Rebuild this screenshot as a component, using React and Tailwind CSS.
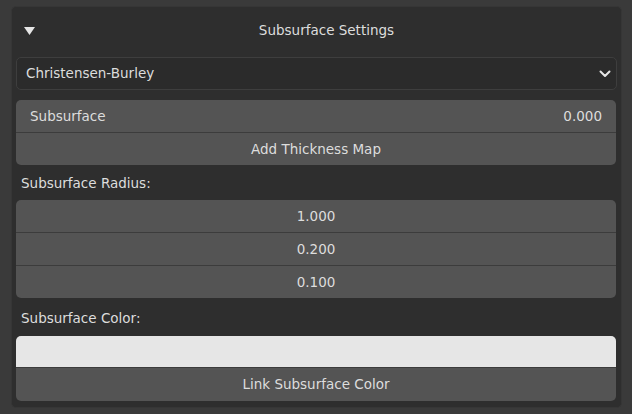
export default function App() {
  const font = { fontFamily: '"DejaVu Sans", "Liberation Sans", sans-serif' };
  return (
    <div className="w-[632px] h-[414px] bg-[#3a3a3a] pt-[6px] pl-[11px]" style={font}>
      <div className="w-[611px] h-[402px] bg-[#2e2e2e] border border-[#363636] rounded-[5px] px-[4px] flex flex-col text-[13.5px] text-[#dddddd]">
        <div className="h-[50px] flex items-center relative">
          <svg className="absolute left-[8px] top-[20px]" width="11" height="8" viewBox="0 0 11 8">
            <path d="M0 0 H11 L5.5 8 Z" fill="#e6e6e6" />
          </svg>
          <div className="w-full text-center pl-[20px] pb-[4px]">Subsurface Settings</div>
        </div>
        <div className="h-[33px] bg-[#2b2b2b] border border-[#3e3e3e] rounded-[5px] flex items-center justify-between pl-[9px] pr-[5px]">
          <span>Christensen-Burley</span>
          <svg width="12" height="8" viewBox="0 0 12 8">
            <path d="M1.5 1.5 L6 6 L10.5 1.5" fill="none" stroke="#e6e6e6" strokeWidth="2" strokeLinecap="round" strokeLinejoin="round" />
          </svg>
        </div>
        <div className="mt-[10px] mr-[1px] rounded-[5px] overflow-hidden bg-[#545454]">
          <div className="h-[32px] flex items-center justify-between px-[14px] pt-[1px]">
            <span>Subsurface</span>
            <span>0.000</span>
          </div>
          <div className="h-px bg-[#3c3c3c]" />
          <div className="h-[32px] flex items-center justify-center pt-[1px]">Add Thickness Map</div>
        </div>
        <div className="h-[35px] flex items-center pl-[5px] pt-[1px]">Subsurface Radius:</div>
        <div className="mr-[1px] rounded-[5px] overflow-hidden bg-[#545454]">
          <div className="h-[32px] flex items-center justify-center">1.000</div>
          <div className="h-px bg-[#3c3c3c]" />
          <div className="h-[32px] flex items-center justify-center">0.200</div>
          <div className="h-px bg-[#3c3c3c]" />
          <div className="h-[32px] flex items-center justify-center">0.100</div>
        </div>
        <div className="h-[38px] flex items-center pl-[5px] pt-[3px]">Subsurface Color:</div>
        <div className="mr-[1px] rounded-[5px] overflow-hidden bg-[#545454]">
          <div className="h-[31px] bg-[#e6e6e6]" />
          <div className="h-px bg-[#3c3c3c]" />
          <div className="h-[33px] flex items-center justify-center">Link Subsurface Color</div>
        </div>
      </div>
    </div>
  );
}
